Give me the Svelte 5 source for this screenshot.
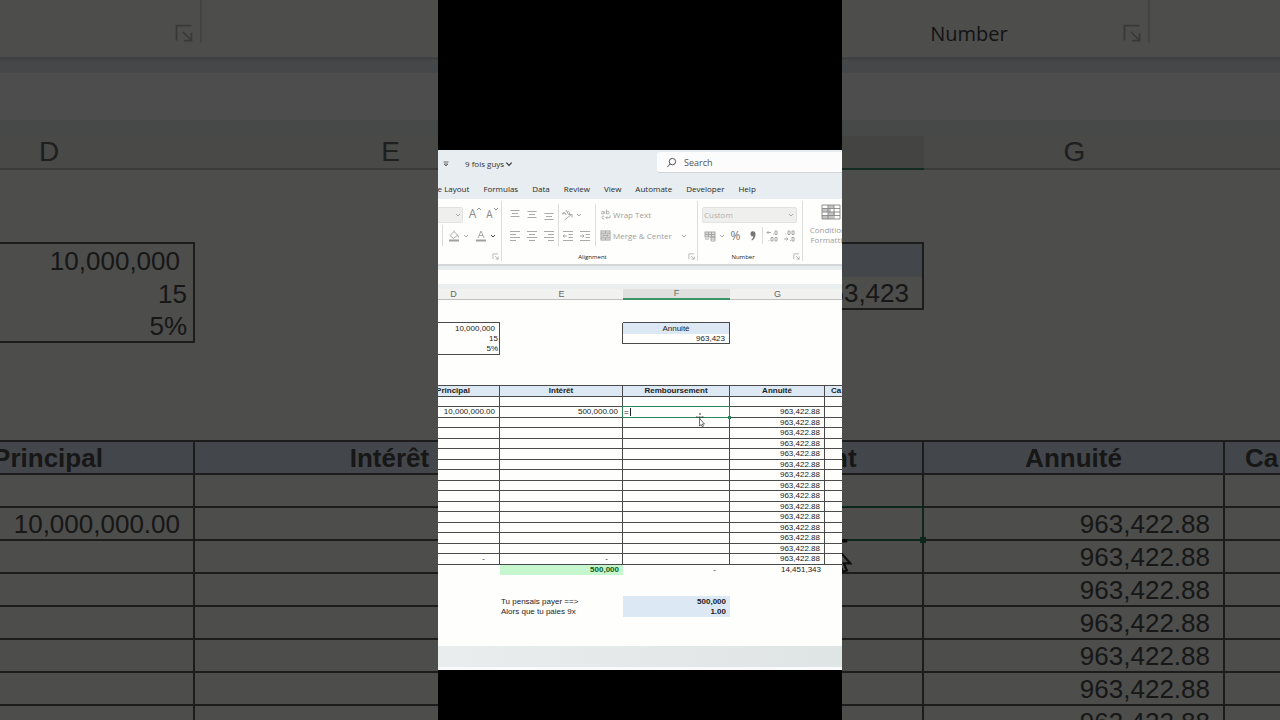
<script lang="ts">
  type Cell = { text?: string; cls?: string; editing?: boolean; active?: boolean };
  type Row = { cls?: string; cells: Cell[] };

  const letters = ['D', 'E', 'F', 'G', ''];
  const tabs = ['Page Layout', 'Formulas', 'Data', 'Review', 'View', 'Automate', 'Developer', 'Help'];

  const frontWidths = [93, 123, 107, 95];
  const backWidths = [292, 391, 338, 301];

  const blank = (): Row => ({ cells: letters.map(() => ({})) });

  const annuity: Cell = { text: '963,422.88', cls: 'num' };

  const top: Row[] = [
    { cls: 'first', cells: [{}, {}, {}, {}, {}] },
    { cells: [{ cls: 'under' }, {}, { cls: 'under' }, {}, {}] },
    {
      cells: [
        { text: '10,000,000', cls: 'num side' },
        { cls: 'side' },
        { text: 'Annuité', cls: 'mid blue side' },
        {},
        {}
      ]
    },
    {
      cells: [
        { text: '15', cls: 'raw side' },
        { cls: 'side' },
        { text: '963,423', cls: 'num side under' },
        {},
        {}
      ]
    },
    { cells: [{ text: '5%', cls: 'raw side under' }, {}, {}, {}, {}] },
    blank(),
    blank(),
    { cells: letters.map(() => ({ cls: 'under' })) },
    {
      cls: 'grid title',
      cells: [
        { text: 'Principal' },
        { text: 'Intérêt' },
        { text: 'Remboursement' },
        { text: 'Annuité' },
        { text: 'Ca', cls: 'left' }
      ]
    },
    { cls: 'grid', cells: blank().cells }
  ];

  const frontRows: Row[] = [
    ...top,
    {
      cls: 'grid',
      cells: [
        { text: '10,000,000.00', cls: 'num' },
        { text: '500,000.00', cls: 'num' },
        { active: true, editing: true },
        annuity,
        {}
      ]
    },
    ...Array.from({ length: 13 }, () => ({ cls: 'grid', cells: [{}, {}, {}, annuity, {}] })),
    { cls: 'grid', cells: [{ text: '-', cls: 'dash' }, { text: '-', cls: 'dash' }, {}, annuity, {}] },
    {
      cells: [
        {},
        { text: '500,000', cls: 'num bold green' },
        { text: '-', cls: 'dash' },
        { text: '14,451,343', cls: 'num' },
        {}
      ]
    },
    blank(),
    blank(),
    { cells: [{}, { text: 'Tu pensais payer ==>', cls: 'note' }, { text: '500,000', cls: 'num bold blue' }, {}, {}] },
    { cells: [{}, { text: 'Alors que tu paies 9x', cls: 'note' }, { text: '1.00', cls: 'num bold blue' }, {}, {}] }
  ];

  const backRows: Row[] = [
    ...top,
    { cls: 'grid', cells: [{ text: '10,000,000.00', cls: 'num' }, {}, { active: true }, annuity, {}] },
    ...Array.from({ length: 6 }, () => ({ cls: 'grid', cells: [{}, {}, {}, annuity, {}] }))
  ];

  let search = $state('');
  let formula = $state('=');
</script>

{#snippet chevron()}
  <svg class="chev" viewBox="0 0 6 6"><path d="M1 2l2 2 2-2" /></svg>
{/snippet}

{#snippet launcher()}
  <button class="launcher" aria-label="More options">
    <svg viewBox="0 0 8 8"><path d="M1 7V1h6M3.500 3.500L7 7M7 4v3H4" /></svg>
  </button>
{/snippet}

{#snippet tool(label: string, d: string, menu = false)}
  <button class="tool" class:menu aria-label={label}>
    <svg viewBox="0 0 12 12"><path {d} /></svg>
    {#if menu}{@render chevron()}{/if}
  </button>
{/snippet}

{#snippet sheet(rows: Row[], widths: number[], label: string, marked: string)}
  <table class="sheet" aria-label={label}>
    <colgroup>
      {#each widths as w}
        <col style:width="{w}px" />
      {/each}
      <col />
    </colgroup>
    <thead>
      <tr>
        {#each letters as letter}
          <th scope="col" class:current={letter === 'F'}>{letter === 'F' ? marked : letter}</th>
        {/each}
      </tr>
    </thead>
    <tbody>
      {#each rows as row}
        <tr class={row.cls}>
          {#each row.cells as cell}
            <td class={cell.cls} class:active={cell.active}>
              {#if cell.editing}
                <input class="editor" aria-label="F11" bind:value={formula} />
              {:else if cell.text}
                {cell.text}
              {/if}
              {#if cell.active}
                <svg class="cursor" viewBox="0 0 10 14">
                  <path class="cross" d="M5 0v2M5 3.500v2M1 4h1.500M3.500 4h1M6.500 4h2" />
                  <path class="arrow" d="M4.500 5.500v7.500l1.700-1.500 1 2.200 1.200-.5-1-2.200h2.100z" />
                </svg>
              {/if}
            </td>
          {/each}
        </tr>
      {/each}
    </tbody>
  </table>
{/snippet}

<main class="stage">
  <div class="backdrop" aria-hidden="true">
    <div class="strip">
      <div class="strip-group fonts">{@render launcher()}</div>
      <div class="strip-group align"></div>
      <div class="strip-group number"><span>Number</span>{@render launcher()}</div>
    </div>
    <div class="band"></div>
    <div class="formula"></div>
    {@render sheet(backRows, backWidths, 'Enlarged sheet', '')}
  </div>

  <div class="clip">
    <section class="excel">
      <header class="titlebar">
        <button class="qat" aria-label="Customize toolbar">
          <svg viewBox="0 0 6 6"><path d="M.5 1h5M1.200 3h3.600L3 5z" /></svg>
        </button>
        <button class="file">9 fois guys {@render chevron()}</button>
        <label class="search">
          <svg viewBox="0 0 12 12"><circle cx="7" cy="5" r="3.500" /><path d="M4.500 7.500L1.500 11" /></svg>
          <input type="text" placeholder="Search" aria-label="Search" bind:value={search} />
        </label>
      </header>

      <nav class="tabs">
        {#each tabs as tab}
          <a href="#{tab}">{tab}</a>
        {/each}
      </nav>

      <div class="ribbon">
        <div class="group fonts">
          <div class="row">
            <button class="size" aria-label="Font size">{@render chevron()}</button>
            <button class="tool letter" aria-label="Increase font size">
              A<svg class="chev" viewBox="0 0 6 6"><path d="M1 4l2-2 2 2" /></svg>
            </button>
            <button class="tool letter small" aria-label="Decrease font size">
              A<svg class="chev" viewBox="0 0 6 6"><path d="M1 2l2 2 2-2" /></svg>
            </button>
          </div>
          <div class="row colors">
            <button class="tool menu" aria-label="Fill color">
              <svg viewBox="0 0 12 12">
                <path d="M2 5.500l4-4 3.500 3.500-4 3.500zM6 1.500V.5M9.500 5l1.200 2.500" />
                <path class="thick" d="M1 10.500h10" />
              </svg>
              {@render chevron()}
            </button>
            <button class="tool menu dark" aria-label="Font color">
              <svg viewBox="0 0 12 12">
                <path d="M3 8l3-7 3 7M4 5.500h4" />
                <path class="thick" d="M1 10.500h10" />
              </svg>
              {@render chevron()}
            </button>
          </div>
          <div class="caption"><span></span>{@render launcher()}</div>
        </div>

        <div class="group align">
          <div class="split">
            <div class="aligns">
              <div class="row">
                {@render tool('Top align', 'M1.500 1.500h9M3 4.500h6M1.500 7.500h9')}
                {@render tool('Middle align', 'M1.500 2.500h9M3 5.500h6M1.500 8.500h9')}
                {@render tool('Bottom align', 'M1.500 4.500h9M3 7.500h6M1.500 10.500h9')}
              </div>
              <div class="row">
                {@render tool('Align left', 'M1 1.500h10M1 4.500h6M1 7.500h10M1 10.500h6')}
                {@render tool('Center', 'M1 1.500h10M3 4.500h6M1 7.500h10M3 10.500h6')}
                {@render tool('Align right', 'M1 1.500h10M5 4.500h6M1 7.500h10M5 10.500h6')}
              </div>
            </div>
            <div class="indents">
              <div class="row">
                {@render tool('Orientation', 'M4.200 3.500L1.800 5.200a1.300 1.300 0 1 1 2.400-1.200l1 2M5 1l2.500 4.500a1.400 1.400 0 1 0-1.200-2.400M3.500 11l7-5.500M8 5.500h3v3', true)}
              </div>
              <div class="row">
                {@render tool('Decrease indent', 'M1 1.500h10M6.500 4.500h4.500M6.500 7.500h4.500M1 10.500h10M5 6H1M2.500 4.500L1 6l1.500 1.500')}
                {@render tool('Increase indent', 'M1 1.500h10M6.500 4.500h4.500M6.500 7.500h4.500M1 10.500h10M1 6h4M3.500 4.500L5 6 3.500 7.500')}
              </div>
            </div>
            <div class="merges">
              <button class="wide">
                <svg viewBox="0 0 12 12">
                  <path d="M4.500 2.500v3M4.500 4a1.500 1.500 0 1 0-3 0 1.500 1.500 0 0 0 3 0M7 .5v5M7 4a1.500 1.500 0 1 0 3 0 1.500 1.500 0 0 0-3 0M4.500 8a1.500 1.500 0 1 0 0 2.500M6.500 9.500h4.500V7M8 8L6.500 9.500 8 11" />
                </svg>
                Wrap Text
              </button>
              <button class="wide">
                <svg viewBox="0 0 12 12">
                  <rect class="shade" x="1" y="1" width="10" height="10" />
                  <path d="M1 3.500h10M1 8.500h10M6 1v2.500M6 8.500V11M3 6h6M4.200 4.800L3 6l1.200 1.200M7.800 4.800L9 6 7.800 7.200" />
                </svg>
                Merge &amp; Center
                {@render chevron()}
              </button>
            </div>
          </div>
          <div class="caption"><span>Alignment</span>{@render launcher()}</div>
        </div>

        <div class="group number">
          <div class="row">
            <div class="format">
              <select aria-label="Number format" disabled><option>Custom</option></select>
              {@render chevron()}
            </div>
          </div>
          <div class="row">
            <button class="tool menu" aria-label="Accounting format">
              <svg viewBox="0 0 12 12">
                <rect class="shade" x="1" y="2" width="10" height="5" />
                <path d="M4.500 2v5M7.500 2v5M1 4.500h10M1 9h4M7 7h4v4H7zM7 9h4" />
              </svg>
              {@render chevron()}
            </button>
            <button class="tool sign" aria-label="Percent style">%</button>
            <button class="tool comma" aria-label="Comma style">
              <svg viewBox="0 0 12 12"><path class="solid" d="M3.500 4a2.300 2.300 0 0 1 5-.5c.3 3-1 5.500-3.500 7l-.7-.8c1.300-1 1.900-2 2-3.400C4.700 6.500 3.500 5.500 3.500 4z" /></svg>
            </button>
            <div class="decimals">
              {@render tool('Increase decimal', 'M5 2.500H1M2.500 1L1 2.500 2.500 4M7 4h.8M9 1h2v3.500H9zM2.500 10.500h.8M5 7.500h2V11H5zM9 7.500h2V11H9z')}
              {@render tool('Decrease decimal', 'M2.500 4h.8M5 1h2v3.500H5zM9 1h2v3.500H9zM1 9h4M3.500 7.500L5 9l-1.500 1.500M7 10.500h.8M9 7.500h2V11H9z')}
            </div>
          </div>
          <div class="caption"><span>Number</span>{@render launcher()}</div>
        </div>

        <div class="group styles">
          <button class="conditional">
            <svg viewBox="0 0 20 16">
              <path class="fill" d="M7 1h6v3.500H7zM1 4.500h9v3.500H1zM7 8h7v3.500H7zM1 11.500h11V15H1z" />
              <path d="M1 1h18v14H1zM1 4.500h18M1 8h18M1 11.500h18M7 1v14M13 1v14" />
            </svg>
            Conditional<br />Formatting
          </button>
        </div>
      </div>

      <div class="band"></div>
      <div class="formula"></div>
      <div class="cells">
        {@render sheet(frontRows, frontWidths, 'Loan schedule', 'F')}
      </div>
      <footer class="status"></footer>
    </section>
  </div>
</main>

<style>
  :global(body) {
    margin: 0;
    background: #000;
  }
  .stage {
    position: relative;
    display: grid;
    grid-template-columns: 438fr 404fr 438fr;
    min-height: 100vh;
    overflow: hidden;
    font-family: 'Open Sans', 'Noto Sans', sans-serif;
    background: #000;
  }
  button {
    display: flex;
    align-items: center;
    margin: 0;
    padding: 0;
    border: 0;
    background: none;
    font: inherit;
    color: inherit;
    white-space: nowrap;
  }
  svg {
    display: block;
    flex: none;
    fill: none;
    stroke: currentColor;
  }

  /* enlarged, dimmed copy behind the clip */
  .backdrop {
    --head: 50px;
    --head-gap: 16px;
    --head-font: 28px;
    --row-odd: 33px;
    --row-even: 33px;
    --row-first: 41px;
    --line: 2px;
    --shift: 97px;
    --pad: 13px;
    --pad-raw: 6px;
    --pad-left: 20px;
    --ink: #4c4c4c;
    --rule: #5c5c5c;
    position: absolute;
    inset: 0;
    overflow: hidden;
    opacity: 0.3;
    background: #fefefc;
    font-size: 26px;
    pointer-events: none;
  }
  .strip {
    display: flex;
    height: 57px;
    box-sizing: border-box;
    padding-bottom: 14px;
    background: #fefefc;
    font-size: 20px;
    color: #444;
  }
  .strip-group {
    display: flex;
    align-items: end;
    justify-content: end;
    flex: none;
    box-sizing: border-box;
    border-right: 2px solid #dcdcda;
    line-height: 18px;
  }
  .strip-group span {
    flex: 1;
    text-align: center;
  }
  .strip-group.fonts {
    width: 202px;
  }
  .strip-group.align {
    width: 620px;
  }
  .strip-group.number {
    width: 328px;
  }
  .strip .launcher,
  .strip :global(.launcher) {
    width: 32px;
    justify-content: center;
    color: #bbb;
  }
  .strip :global(.launcher svg) {
    width: 20px;
    height: 20px;
    stroke-width: 0.7;
  }
  .backdrop .band {
    height: 16px;
    border-top-width: 3px;
  }
  .backdrop .formula {
    height: 47px;
  }

  .clip {
    position: relative;
    grid-column: 2;
    min-width: 0;
    padding: 150px 0 50px;
    background: #000;
  }
  .excel {
    --head: 16px;
    --head-gap: 5px;
    --head-font: 9px;
    --row-odd: 11px;
    --row-even: 10px;
    --row-first: 12px;
    --line: 1px;
    --shift: 31px;
    --pad: 4px;
    --pad-raw: 1px;
    --pad-left: 6px;
    --ink: #1c1c1c;
    --rule: #4a4a4a;
    overflow: hidden;
    background: #fefefc;
    color: #333;
    font-size: 8px;
  }
  .excel svg {
    stroke-width: 0.9;
  }

  .titlebar {
    display: flex;
    align-items: center;
    height: 27px;
    background: #e7edf0;
  }
  .qat {
    width: 27px;
    padding-left: 5px;
    box-sizing: border-box;
  }
  .qat svg {
    width: 6px;
    height: 6px;
    stroke-width: 0.7;
  }
  .chev {
    width: 6px;
    height: 6px;
  }
  .file {
    gap: 1px;
    width: 192px;
  }
  .file :global(.chev) {
    width: 8px;
    height: 8px;
  }
  .search {
    display: flex;
    align-items: center;
    flex: 1;
    gap: 7px;
    height: 20px;
    margin-right: -4px;
    margin-bottom: 2px;
    padding-left: 9px;
    border-bottom: 1px solid #cfd4d6;
    border-radius: 3px;
    background: #fbfcfb;
  }
  .search svg {
    width: 11px;
    height: 11px;
  }
  .search input {
    width: 100%;
    min-width: 0;
    padding: 0;
    border: 0;
    outline: 0;
    background: none;
    font: inherit;
    font-size: 9px;
    color: #444;
  }
  .search input::placeholder {
    color: #555;
  }

  .tabs {
    display: flex;
    align-items: center;
    gap: 14px;
    height: 22px;
    box-sizing: border-box;
    padding-top: 2px;
    background: #e7edf0;
    white-space: nowrap;
  }
  .tabs a {
    color: #2a2a2a;
    line-height: 12px;
    text-decoration: none;
  }
  .tabs a:first-child {
    margin-left: -14px;
  }

  .ribbon {
    display: flex;
    height: 65px;
    color: #a0a09e;
  }
  .group {
    display: flex;
    flex-direction: column;
    flex: none;
    box-sizing: border-box;
    margin: 2px 0 3px;
    padding-top: 3px;
    border-right: 1px solid #dcdcda;
  }
  .group.fonts {
    width: 64px;
  }
  .group.align {
    width: 196px;
    padding-left: 4px;
  }
  .group.number {
    width: 105px;
    padding-left: 4px;
  }
  .group.styles {
    flex: 1;
    min-width: 0;
    border: 0;
    overflow: hidden;
  }
  .row {
    display: flex;
    align-items: center;
    height: 21px;
  }
  .tool {
    justify-content: center;
    width: 17px;
    height: 17px;
  }
  .tool svg {
    width: 12px;
    height: 12px;
  }
  .tool .chev,
  .tool :global(.chev) {
    width: 6px;
    height: 6px;
  }
  .tool.menu {
    gap: 3px;
    width: 25px;
  }
  .tool.dark :global(.chev) {
    color: #333;
  }
  .thick {
    stroke-width: 2;
  }
  .shade {
    fill: #ddd;
  }
  .solid {
    fill: #777;
    stroke: none;
  }
  .size {
    justify-content: end;
    width: 25px;
    height: 16px;
    margin-right: 4px;
    padding-right: 1px;
    box-sizing: border-box;
    border: 1px solid #e2e2e0;
    border-left: 0;
    border-radius: 0 2px 2px 0;
    background: #efefed;
  }
  .letter {
    align-items: start;
    font-size: 12px;
    line-height: 16px;
    color: #888;
  }
  .letter.small {
    font-size: 10px;
  }
  .colors {
    margin-left: 4px;
    padding-left: 3px;
    gap: 2px;
    border-left: 1px solid #dcdcda;
  }
  .caption {
    display: flex;
    align-items: center;
    flex: 1;
    padding-top: 6px;
    color: #222;
    font-size: 6px;
    font-weight: 500;
    line-height: 8px;
  }
  .caption span {
    flex: 1;
    padding-right: 9px;
    text-align: center;
  }
  .caption :global(.launcher) {
    width: 9px;
    color: #aaa;
  }
  .caption :global(.launcher svg) {
    width: 7px;
    height: 7px;
  }
  .split {
    display: flex;
  }
  .aligns {
    width: 52px;
  }
  .indents {
    width: 36px;
    border-left: 1px solid #dcdcda;
    border-right: 1px solid #dcdcda;
  }
  .merges {
    flex: 1;
    padding-left: 4px;
  }
  .wide {
    gap: 2px;
    width: 100%;
    height: 21px;
  }
  .wide svg {
    width: 11px;
    height: 11px;
  }
  .wide :global(.chev) {
    width: 6px;
    height: 6px;
    margin-left: auto;
    margin-right: 10px;
  }
  .format {
    display: flex;
    align-items: center;
    width: 95px;
    height: 16px;
    box-sizing: border-box;
    padding-right: 2px;
    border: 1px solid #e2e2e0;
    border-radius: 2px;
    background: #efefed;
  }
  .format select {
    flex: 1;
    min-width: 0;
    padding: 0 1px;
    border: 0;
    appearance: none;
    background: none;
    font: inherit;
    color: #b0b0ae;
    opacity: 1;
  }
  .sign {
    font-size: 12px;
    color: #777;
  }
  .decimals {
    display: flex;
    margin-left: 1px;
    border-left: 1px solid #dcdcda;
  }
  .conditional {
    flex-direction: column;
    align-items: center;
    width: 50px;
    margin-left: 3px;
    line-height: 10px;
  }
  .conditional svg {
    width: 20px;
    height: 16px;
    margin-bottom: 5px;
    color: #888;
  }
  .conditional .fill {
    fill: #c4c4c4;
    stroke: none;
  }

  .band {
    box-sizing: border-box;
    height: 6px;
    border-top: 2px solid #d3d7d9;
    background: #e7ecef;
  }
  .formula {
    height: 14px;
    background: #fefefd;
  }
  .cells {
    min-height: 362px;
  }
  .status {
    height: 21px;
    border-bottom: 3px solid #fafafa;
    background: linear-gradient(90deg, #e9edee, #dfe4e5);
  }

  .sheet {
    width: calc(100% + var(--shift));
    margin-left: calc(-1 * var(--shift));
    table-layout: fixed;
    border-spacing: 0;
    color: var(--ink);
    font-family: 'Liberation Sans', Arial, sans-serif;
    line-height: 1;
  }
  th,
  td {
    box-sizing: border-box;
    padding: 0;
    white-space: nowrap;
  }
  th {
    height: var(--head);
    border-top: var(--head-gap) solid #ebeeee;
    border-bottom: var(--line) solid #bfc0be;
    background: #f1f1ef;
    font-size: var(--head-font);
    font-weight: 400;
    color: #666;
  }
  th.current {
    border-bottom: 2px solid #3d9467;
    background: #e0e1de;
    color: #5a7565;
  }
  tbody tr {
    height: var(--row-even);
  }
  tbody tr:nth-child(odd),
  tbody tr:nth-child(2) {
    height: var(--row-odd);
  }
  tbody tr.first {
    height: var(--row-first);
  }
  .grid td {
    border-right: var(--line) solid var(--rule);
    border-bottom: var(--line) solid var(--rule);
  }
  .grid td:last-child {
    border-right: 0;
  }
  .title td {
    background: #dce8f3;
    font-weight: 700;
    text-align: center;
  }
  .under {
    border-bottom: var(--line) solid var(--rule);
  }
  .side {
    border-right: var(--line) solid var(--rule);
  }
  .num {
    padding-right: var(--pad);
    text-align: right;
  }
  .raw {
    padding-right: var(--pad-raw);
    text-align: right;
  }
  .dash {
    padding-right: 14px;
    text-align: right;
  }
  .mid {
    text-align: center;
  }
  .note {
    padding-left: 1px;
  }
  .title .left {
    padding-left: var(--pad-left);
    text-align: left;
  }
  .bold {
    font-weight: 700;
  }
  .blue {
    background: #dce8f3;
  }
  .green {
    background: #c6f6cd;
    color: #0b5c18;
  }
  .active {
    position: relative;
  }
  .active::before {
    content: '';
    position: absolute;
    inset: calc(-1 * var(--line));
    border: var(--line) solid #2f8259;
    pointer-events: none;
  }
  .active::after {
    content: '';
    position: absolute;
    right: calc(-2 * var(--line));
    bottom: calc(-2 * var(--line));
    width: calc(3 * var(--line));
    height: calc(3 * var(--line));
    background: #2f8259;
  }
  .editor {
    display: block;
    width: 7px;
    height: 8px;
    box-sizing: border-box;
    margin-left: 1px;
    padding: 0;
    border: 0;
    border-right: 1px solid #222;
    outline: 0;
    background: none;
    font: inherit;
    color: inherit;
  }
  .cursor {
    position: absolute;
    z-index: 1;
    top: 6px;
    left: 9em;
    width: 10px;
    height: 14px;
  }
  .backdrop .cursor {
    top: 20px;
    width: 32px;
    height: 45px;
  }
  .cross {
    stroke: #222;
  }
  .arrow {
    fill: #fff;
    stroke: #333;
    stroke-width: 0.7;
  }
</style>
